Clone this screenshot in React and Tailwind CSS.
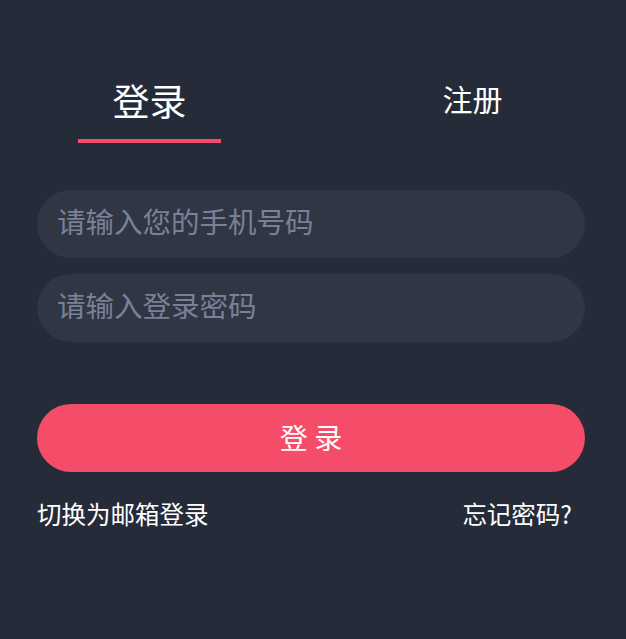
import { useState } from 'react';

export default function App() {
  const [tab, setTab] = useState('login');

  return (
    <div className="min-h-screen w-full bg-[#262b3a] pl-[37px] pr-[41px] pt-[78px] font-['Noto_Sans_CJK_SC','Noto_Sans',sans-serif] text-white">
      {/* 顶部切换 */}
      <div className="flex items-start">
        <button onClick={() => setTab('login')} className="ml-[41px] flex w-[143px] flex-col items-center">
          <span className="text-[37px] leading-[44px]">登录</span>
          <span className={`mt-[17px] h-[4px] w-full ${tab === 'login' ? 'bg-[#f54d69]' : 'bg-transparent'}`} />
        </button>
        <button onClick={() => setTab('register')} className="ml-[180px] flex w-[143px] flex-col items-center">
          <span className="text-[30px] leading-[40px]">注册</span>
          <span className={`mt-[21px] h-[4px] w-full ${tab === 'register' ? 'bg-[#f54d69]' : 'bg-transparent'}`} />
        </button>
      </div>

      {/* 表单 */}
      <div className="mt-[47px] flex flex-col gap-[16px]">
        <input
          type="tel"
          placeholder="请输入您的手机号码"
          className="h-[68px] w-full rounded-full bg-[#313644] pl-[20px] pb-[7px] text-[28.5px] text-white outline-none placeholder:text-[#7b8096]"
        />
        <input
          type="password"
          placeholder="请输入登录密码"
          className="h-[68px] w-full rounded-full bg-[#313644] pl-[20px] pb-[7px] text-[28.5px] text-white outline-none placeholder:text-[#7b8096]"
        />
      </div>

      <button className="mt-[62px] flex h-[68px] w-full items-center justify-center rounded-full bg-[#f54d69] pb-[3px] text-[28px] text-white">
        登 录
      </button>

      <div className="mt-[25px] flex items-center justify-between text-[24.5px] leading-[34px]">
        <span>切换为邮箱登录</span>
        <span className="mr-[13px]">忘记密码?</span>
      </div>
    </div>
  );
}
